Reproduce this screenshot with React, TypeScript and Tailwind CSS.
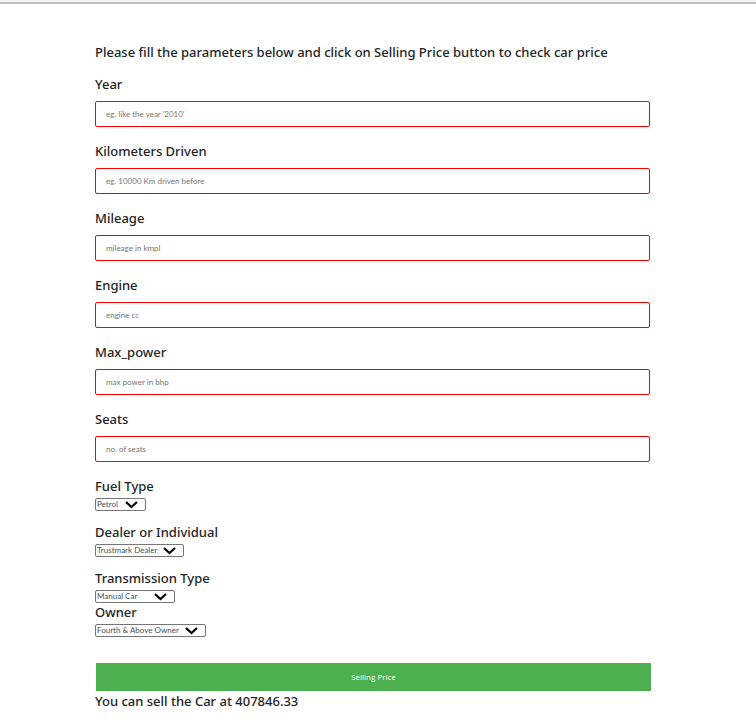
import React from "react";

type Field = { id: string; label: string; hint: string };
type Choice = { id: string; label: string; options: string[]; width: string; spacing: string };

const fields: Field[] = [
  { id: "year", label: "Year", hint: "eg. like the year '2010'" },
  { id: "km", label: "Kilometers Driven", hint: "eg. 10000 Km driven before" },
  { id: "mileage", label: "Mileage", hint: "mileage in kmpl" },
  { id: "engine", label: "Engine", hint: "engine cc" },
  { id: "power", label: "Max_power", hint: "max power in bhp" },
  { id: "seats", label: "Seats", hint: "no. of seats" },
];

const choices: Choice[] = [
  { id: "fuel", label: "Fuel Type", options: ["Petrol", "Diesel", "CNG", "LPG"], width: "w-[51px]", spacing: "mb-[13px]" },
  { id: "seller", label: "Dealer or Individual", options: ["Trustmark Dealer", "Dealer", "Individual"], width: "w-[89px]", spacing: "mb-[13px]" },
  { id: "transmission", label: "Transmission Type", options: ["Manual Car", "Automatic Car"], width: "w-[80px]", spacing: "mb-px" },
  { id: "owner", label: "Owner", options: ["Fourth & Above Owner", "First Owner", "Second Owner", "Third Owner"], width: "w-[111px]", spacing: "mb-0" },
];

const labelText = "text-[13px] leading-4 font-medium";

export default function App() {
  return (
    <div className="min-h-screen bg-white font-['Segoe_UI','Noto_Sans',sans-serif] text-[#212529]">
      <header className="h-1 border-b-2 border-[#bfbfbf] bg-[#f2f2f2]" />
      <form className="pt-10 pr-[106px] pl-[95px]" onSubmit={(e) => e.preventDefault()}>
        <h1 className={`mb-4 ${labelText}`}>
          Please fill the parameters below and click on Selling Price button to check car price
        </h1>
        {fields.map((f) => (
          <div key={f.id} className="mb-4 flex flex-col gap-[9px]">
            <label htmlFor={f.id} className={labelText}>{f.label}</label>
            <input
              id={f.id}
              type="text"
              placeholder={f.hint}
              className="h-[26px] w-full rounded-xs border border-[#f00] px-[10px] font-['Segoe_UI',Lato,sans-serif] text-[8px] placeholder:text-[#757575]"
            />
          </div>
        ))}
        {choices.map((c) => (
          <div key={c.id} className={`flex flex-col items-start gap-1 ${c.spacing}`}>
            <label htmlFor={c.id} className={labelText}>{c.label}</label>
            <div className={`relative ${c.width}`}>
              <select
                id={c.id}
                className="block h-[13px] w-full appearance-none rounded-xs border border-[#767676] bg-white pl-px font-['Segoe_UI',Lato,sans-serif] text-[8px] leading-[11px] text-[#495057]"
              >
                {c.options.map((o) => (
                  <option key={o}>{o}</option>
                ))}
              </select>
              <svg viewBox="0 0 13 8" className="pointer-events-none absolute top-[3px] right-2 h-2 w-[13px]" fill="none" stroke="#000" strokeWidth="2.2">
                <path d="M1 1l5.5 5L12 1" />
              </svg>
            </div>
          </div>
        ))}
        <div className="-mr-px ml-px pt-[26px]">
          <button type="submit" className="block h-7 w-full bg-[#4caf50] font-['Segoe_UI','Open_Sans',sans-serif] text-[8px] font-medium text-white">
            Selling Price
          </button>
        </div>
        <output className={`mt-[2px] block ${labelText}`}>You can sell the Car at 407846.33</output>
      </form>
    </div>
  );
}
